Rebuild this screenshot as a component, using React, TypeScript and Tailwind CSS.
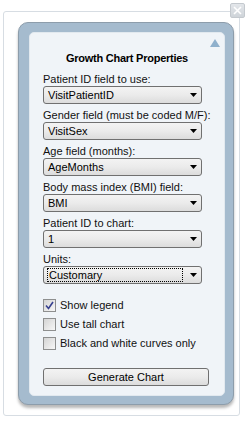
import React from "react";

const font = { fontFamily: '"Liberation Sans", Arial, sans-serif' };

function Arrow() {
  return (
    <svg width="7" height="4" viewBox="0 0 7 4" className="shrink-0">
      <path d="M0 0 L7 0 L3.5 4 Z" fill="#000" />
    </svg>
  );
}

function Select({ value, focus }: { value: string; focus?: boolean }) {
  return (
    <div className="flex h-[18px] w-[159px] items-center justify-between rounded-[3px] border border-[#707070] bg-gradient-to-b from-[#f3f3f3] via-[#ebebeb] to-[#dcdcdc] pl-[3px] pr-[4px]">
      {focus ? (
        <div className="flex h-[14px] w-[136px] items-center border border-dotted border-black pl-[1px] text-[11px] leading-[13px] text-black">
          {value}
        </div>
      ) : (
        <span className="pl-[1px] text-[11px] leading-[13px] text-black">{value}</span>
      )}
      <Arrow />
    </div>
  );
}

function Field({ label, value, focus }: { label: string; value: string; focus?: boolean }) {
  return (
    <div className="flex flex-col">
      <div className="h-[13px] text-[11px] leading-[13px] text-[#111]">{label}</div>
      <Select value={value} focus={focus} />
    </div>
  );
}

function Check({ label, checked }: { label: string; checked?: boolean }) {
  return (
    <div className="flex h-[19px] items-center gap-[4px]">
      <div className="flex h-[13px] w-[13px] items-center justify-center border border-[#8e8f8f] bg-gradient-to-br from-[#d4d4d4] to-[#f7f7f7]">
        {checked && (
          <svg width="9" height="9" viewBox="0 0 9 9">
            <path d="M1 4.5 L3.5 7.5 L8 1" stroke="#36408f" strokeWidth="1.6" fill="none" />
          </svg>
        )}
      </div>
      <span className="text-[11px] leading-[13px] text-[#111]">{label}</span>
    </div>
  );
}

export default function App() {
  return (
    <div className="relative h-[421px] w-[250px] bg-white" style={font}>
      <div className="absolute left-[230px] top-[3px] flex h-[15px] w-[15px] items-center justify-center rounded-[2px] border border-[#c4c9ce] bg-gradient-to-b from-[#e3e6ea] to-[#cfd4d9]">
        <svg width="9" height="9" viewBox="0 0 9 9">
          <path d="M1 1 L8 8 M8 1 L1 8" stroke="#fff" strokeWidth="1.6" />
        </svg>
      </div>
      <div className="pl-[3px] pt-[11px]">
        <div className="h-[405px] w-[237px] rounded-[3px] border border-[#d7dde3] pl-[14px] pt-[10px]">
          <div className="h-[383px] w-[216px] rounded-[10px] border border-[#8d9dab] bg-[#a5bbce] pb-[8px] pl-[10px] pr-[8px] pt-[9px] shadow-[0_3px_3px_rgba(0,0,0,0.28)]">
            <div className="relative h-[364px] w-[196px] rounded-[5px] border border-[#e2e9ef] bg-[#f0f4f8] pl-[13px] pt-[19px]">
              <svg className="absolute left-[180px] top-[6px]" width="10" height="8" viewBox="0 0 10 8">
                <path d="M0 8 L5 0 L10 8 Z" fill="#8fb0cc" />
              </svg>
              <div className="pr-[13px] text-center text-[11px] font-bold leading-[13px] tracking-[-0.25px] text-black">
                Growth Chart Properties
              </div>
              <div className="mt-[8px] flex flex-col gap-[5px]">
                <Field label="Patient ID field to use:" value="VisitPatientID" />
                <Field label="Gender field (must be coded M/F):" value="VisitSex" />
                <Field label="Age field (months):" value="AgeMonths" />
                <Field label="Body mass index (BMI) field:" value="BMI" />
                <Field label="Patient ID to chart:" value="1" />
                <Field label="Units:" value="Customary" focus />
              </div>
              <div className="mt-[12px] flex flex-col">
                <Check label="Show legend" checked />
                <Check label="Use tall chart" />
                <Check label="Black and white curves only" />
              </div>
              <div className="mt-[15px] flex h-[18px] w-[166px] items-center justify-center rounded-[3px] border border-[#707070] bg-gradient-to-b from-[#f3f3f3] via-[#ebebeb] to-[#dcdcdc] text-[11px] leading-[13px] text-black">
                Generate Chart
              </div>
            </div>
          </div>
        </div>
      </div>
    </div>
  );
}
